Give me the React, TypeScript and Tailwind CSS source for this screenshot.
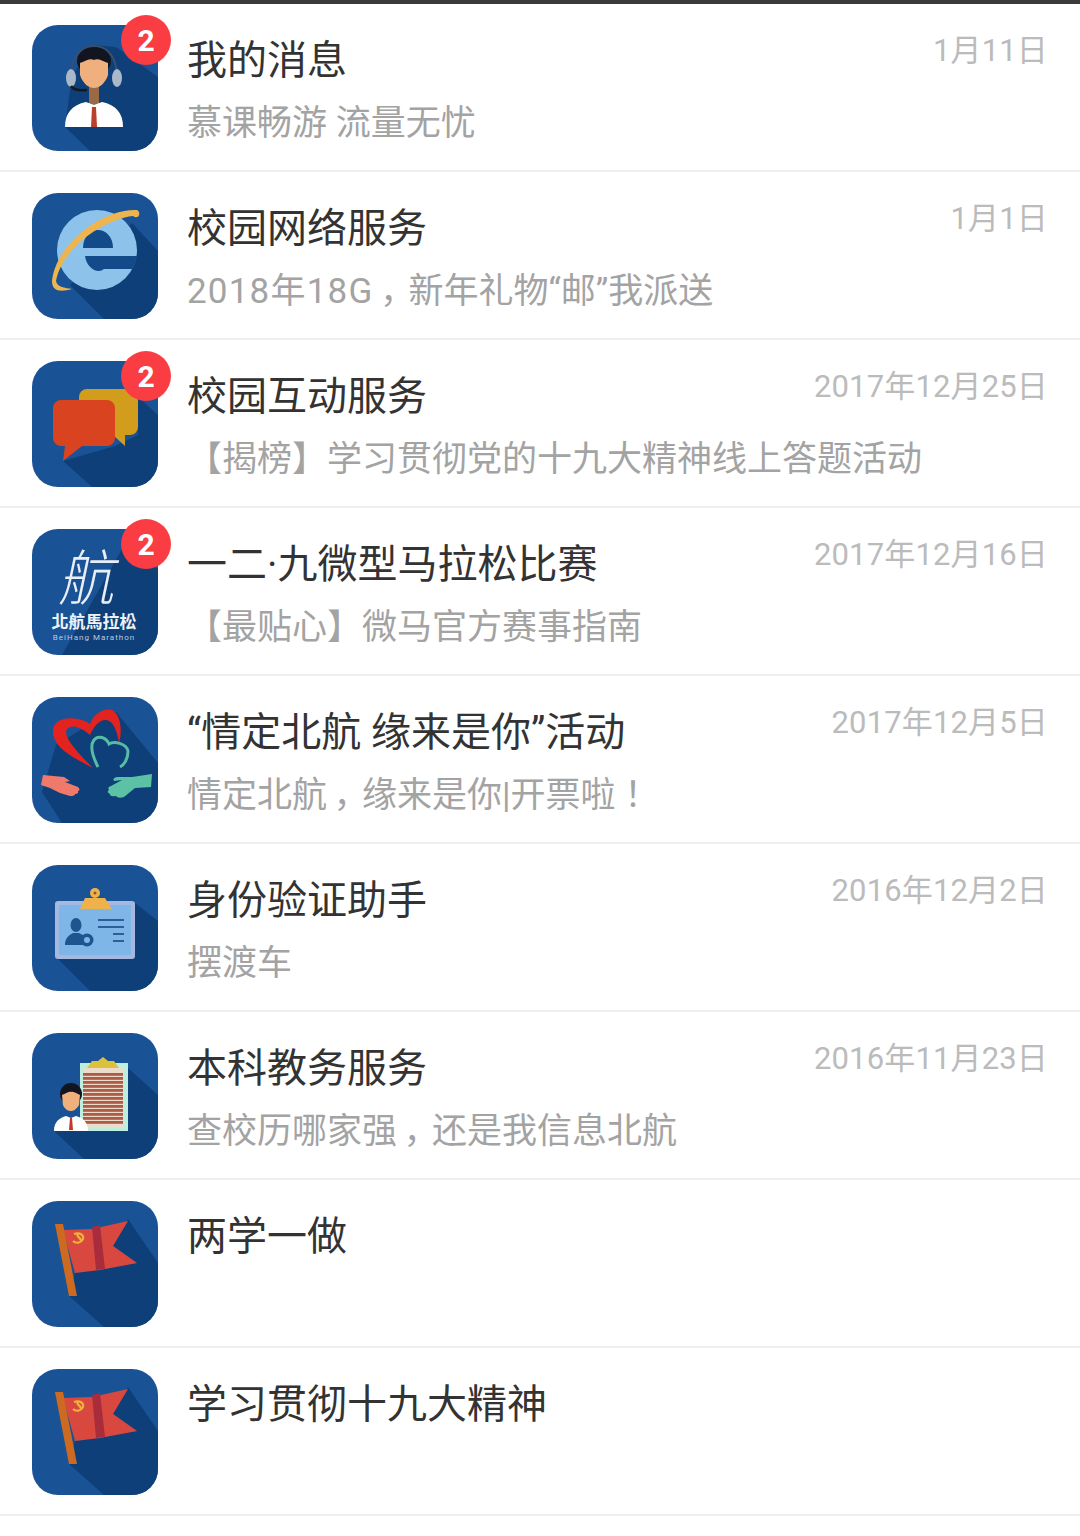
import React from "react";

const BASE = "#1a5296";
const SHADOW = "#0f3f78";

function Person() {
  return (
    <svg viewBox="0 0 126 126" className="block w-full h-full">
      <rect width="126" height="126" fill={BASE} />
      <polygon points="33,102 58,126 126,126 126,52 84,22 62,20 40,50" fill={SHADOW} />
      <rect x="57" y="58" width="10" height="22" fill="#9a6a46" />
      <path d="M33 102 C33 88 40 80 54 77 L62 80 L70 77 C84 80 91 88 91 102 Z" fill="#ffffff" />
      <polygon points="60,82 64,82 65,102 59,102" fill="#b9412b" />
      <path d="M39 53 C39 30 50 21 62 21 C74 21 85 30 85 53" fill="none" stroke="#3b4f6c" strokeWidth="2" />
      <ellipse cx="62" cy="36" rx="17" ry="14" fill="#12151f" />
      <path d="M48 38 C54 36 58 33 62 35 C66 33 70 36 76 38 L76 50 C73 59 67 63 62 63 C57 63 51 59 48 50 Z" fill="#f0b07d" />
      <ellipse cx="39" cy="53" rx="5" ry="9" fill="#aab9c9" />
      <ellipse cx="85" cy="53" rx="5" ry="9" fill="#aab9c9" />
      <path d="M39 61 C41 64 46 66 55 65" fill="none" stroke="#16181f" strokeWidth="2.5" />
    </svg>
  );
}

function IE() {
  return (
    <svg viewBox="0 0 126 126" className="block w-full h-full">
      <rect width="126" height="126" fill={BASE} />
      <polygon points="100,30 126,58 126,126 72,126 38,92" fill={SHADOW} />
      <circle cx="65" cy="57" r="40" fill="#8dc3ea" />
      <path d="M51 55 C51 44 58 37 66 37 C74 37 81 44 81 55 Z" fill="#124a8a" />
      <path d="M53 63 H105 C104 69 102 74 100 76 H72 C66 81 55 76 53 63 Z" fill="#124a8a" />
      <path d="M105 17 C110 20 106 27 101 23 C72 26 30 55 24 88 C25 94 33 95 40 96 C29 99 20 99 20 88 C24 50 72 15 105 17 Z" fill="#eeb54f" />
    </svg>
  );
}

function Chat() {
  return (
    <svg viewBox="0 0 126 126" className="block w-full h-full">
      <rect width="126" height="126" fill={BASE} />
      <polygon points="31,100 60,126 126,126 126,54 106,36 106,74 83,85" fill={SHADOW} />
      <path d="M55 28 H98 A8 8 0 0 1 106 36 V66 A8 8 0 0 1 98 74 H93 V85 L81 74 H55 A8 8 0 0 1 47 66 V36 A8 8 0 0 1 55 28 Z" fill="#d29d1d" />
      <path d="M29 39 H75 A8 8 0 0 1 83 47 V77 A8 8 0 0 1 75 85 H50 L31 100 L33 85 H29 A8 8 0 0 1 21 77 V47 A8 8 0 0 1 29 39 Z" fill="#d9431f" />
    </svg>
  );
}

function Marathon() {
  return (
    <svg viewBox="0 0 126 126" className="block w-full h-full">
      <rect width="126" height="126" fill={BASE} />
      <polygon points="30,126 126,126 126,40 90,20" fill={SHADOW} />
      <text
        x="0"
        y="0"
        transform="translate(26 71) skewX(-12) scale(1.12 1.2)"
        fontSize="50"
        fill="#e8eef6"
        fontWeight="300"
        fontFamily='"Noto Sans CJK SC", sans-serif'
      >
        航
      </text>
      <text x="62" y="99" textAnchor="middle" fontSize="17" fontWeight="700" fill="#eef2f7" fontFamily='"Noto Sans CJK TC", sans-serif'>
        北航馬拉松
      </text>
      <text x="62" y="111" textAnchor="middle" fontSize="8" fill="#b9cbe0" fontFamily="Roboto, sans-serif" letterSpacing="1">
        BeiHang Marathon
      </text>
    </svg>
  );
}

function Hearts() {
  return (
    <svg viewBox="0 0 126 126" className="block w-full h-full">
      <rect width="126" height="126" fill={BASE} />
      <polygon points="84,15 126,66 126,126 30,126 10,95 24,48 58,27" fill={SHADOW} />
      <path d="M61 71 C40 60 20 50 21 33 C22 22 36 20 46 22 C52 23 55 25 58 27 C62 15 74 11 80 13 C88 17 91 32 87 46 C85 32 80 23 74 23 C66 23 62 30 58 38 C50 31 42 27 36 31 C29 37 42 52 61 71 Z" fill="#e2231f" />
      <path d="M66 70 C60 58 58 48 62 43 C66 38 74 40 77 47 C82 44 94 46 96 54 C96 62 92 68 88 70" fill="none" stroke="#58bba6" strokeWidth="3" />
      <path d="M11 78 L32 80 L38 84 L33 85 L46 90 Q49 93 46 94 Q47 97 43 97 Q43 99 38 99 L28 96 L18 91 L9 88 Z" fill="#ef7a6c" />
      <path d="M120 77 L119 90 L103 91 L92 100 Q86 102 84 99 Q78 100 78 97 Q74 95 77 93 Q75 90 79 89 L90 83 L82 84 Q80 81 85 80 L100 80 Z" fill="#5cc2a5" />
    </svg>
  );
}

function IdCard() {
  return (
    <svg viewBox="0 0 126 126" className="block w-full h-full">
      <rect width="126" height="126" fill={BASE} />
      <polygon points="26,94 58,126 126,126 126,56 103,38" fill={SHADOW} />
      <rect x="23" y="36" width="80" height="58" rx="3" fill="#a5b9e0" />
      <rect x="27" y="40" width="72" height="50" rx="1" fill="#7fb6e8" />
      <circle cx="63" cy="28" r="5" fill="#eeb14c" />
      <circle cx="63" cy="28" r="1.5" fill="#8a5a20" />
      <polygon points="53,33 73,33 80,44 48,44" fill="#eeb14c" />
      <ellipse cx="44" cy="60" rx="5.5" ry="7" fill="#1d568f" />
      <path d="M33 80 C33 72 38 70 41 68 L47 68 C51 70 55 71 56 80 Z" fill="#1d568f" />
      <circle cx="55" cy="75" r="6.5" fill="#1d568f" />
      <circle cx="55" cy="75" r="3" fill="#7fb6e8" />
      <path d="M66 55 H92 M66 62 H92 M81 69 H92 M81 76 H92" stroke="#2a5f97" strokeWidth="1.8" />
    </svg>
  );
}

function Clipboard() {
  const lines = [40, 44, 48, 52, 56, 60, 64, 68, 72, 76, 80, 84, 88];
  return (
    <svg viewBox="0 0 126 126" className="block w-full h-full">
      <rect width="126" height="126" fill={BASE} />
      <polygon points="22,98 52,126 126,126 126,62 96,35 96,98" fill={SHADOW} />
      <rect x="48" y="30" width="48" height="68" fill="#bdeee0" />
      <rect x="51" y="34" width="40" height="60" fill="#ecdccb" />
      {lines.map((y) => (
        <rect key={y} x="51" y={y} width="40" height="2.8" fill="#ad5a46" />
      ))}
      <path d="M55 35 L60 28 H66 L71 24 L76 28 H82 L87 35 Z" fill="#dcc23c" />
      <path d="M22 98 C22 88 28 85 34 83 L39 85 L44 83 C50 85 56 88 56 98 Z" fill="#ffffff" />
      <polygon points="38,85 40,85 41,97 37,97" fill="#c0392b" />
      <circle cx="39" cy="61" r="11" fill="#12151f" />
      <path d="M30 62 C34 61 36 58 39 59 C42 58 45 61 48 62 L47 72 C44 77 41 78 39 78 C37 78 33 77 31 72 Z" fill="#f0b07d" />
    </svg>
  );
}

function Flag() {
  return (
    <svg viewBox="0 0 126 126" className="block w-full h-full">
      <rect width="126" height="126" fill={BASE} />
      <polygon points="37,95 72,126 126,126 126,62 96,18 81,45 105,62 43,72" fill={SHADOW} />
      <polygon points="31,29 60,28 96,20 81,45 105,62 68,69 43,72" fill="#d8483f" />
      <polygon points="60,26 68,24 73,68 64,69" fill="#a92c3c" />
      <polygon points="23,23 31,23 45,95 37,95" fill="#cc6a22" />
      <path d="M42 33 C48 31 52 34 51 38 C49 42 44 43 41 40 M45 34 L49 39" fill="none" stroke="#f0b03c" strokeWidth="2.2" />
    </svg>
  );
}

const Comma = () => <span className="inline-block w-[35px] text-center [font-feature-settings:'palt']">，</span>;
const Bang = () => <span className="font-['Noto_Sans_CJK_TC',sans-serif] leading-[0]">！</span>;

type Item = {
  icon: React.ReactNode;
  title: string;
  sub?: React.ReactNode;
  date?: string;
  badge?: boolean;
};

const items: Item[] = [
  { icon: <Person />, title: "我的消息", sub: "慕课畅游 流量无忧", date: "1月11日", badge: true },
  { icon: <IE />, title: "校园网络服务", sub: <><span className="tracking-[1.2px]">2018年18G</span><Comma />新年礼物“邮”我派送</>, date: "1月1日" },
  { icon: <Chat />, title: "校园互动服务", sub: "【揭榜】学习贯彻党的十九大精神线上答题活动", date: "2017年12月25日", badge: true },
  { icon: <Marathon />, title: "一二·九微型马拉松比赛", sub: "【最贴心】微马官方赛事指南", date: "2017年12月16日", badge: true },
  { icon: <Hearts />, title: "“情定北航 缘来是你”活动", sub: <>情定北航<Comma />缘来是你|开票啦<Bang /></>, date: "2017年12月5日" },
  { icon: <IdCard />, title: "身份验证助手", sub: "摆渡车", date: "2016年12月2日" },
  { icon: <Clipboard />, title: "本科教务服务", sub: <>查校历哪家强<Comma />还是我信息北航</>, date: "2016年11月23日" },
  { icon: <Flag />, title: "两学一做" },
  { icon: <Flag />, title: "学习贯彻十九大精神" },
];

export default function App() {
  return (
    <div className="w-[1080px] h-[1536px] overflow-hidden bg-white font-['Roboto','Noto_Sans_CJK_SC',sans-serif]">
      <div className="h-[4px] bg-[#3b3b3b]" />
      {items.map((it, i) => (
        <div key={i} className="flex h-[168px] border-b-2 border-[#eeeeee] pl-[32px] pr-[32px] pt-[21px]">
          <div className="relative h-[126px] w-[126px] shrink-0">
            <div className="h-full w-full overflow-hidden rounded-[26px]">{it.icon}</div>
            {it.badge && (
              <div className="absolute right-[-13px] top-[-10px] flex h-[50px] w-[50px] items-center justify-center rounded-full bg-[#f93d43] text-[30px] font-bold text-white">
                2
              </div>
            )}
          </div>
          <div className="ml-[29px] min-w-0 flex-1 pt-[10px]">
            <div className="flex items-start justify-between">
              <div className="h-[52px] text-[40px] leading-[52px] text-[#333333] whitespace-nowrap">{it.title}</div>
              {it.date && (
                <div className="mt-[-10px] text-[31px] tracking-[0.15px] leading-[52px] text-[#bbbbbb] whitespace-nowrap">{it.date}</div>
              )}
            </div>
            {it.sub && (
              <div className="mt-[15px] h-[44px] text-[35px] leading-[44px] text-[#a3a3a3] whitespace-nowrap">{it.sub}</div>
            )}
          </div>
        </div>
      ))}
    </div>
  );
}
